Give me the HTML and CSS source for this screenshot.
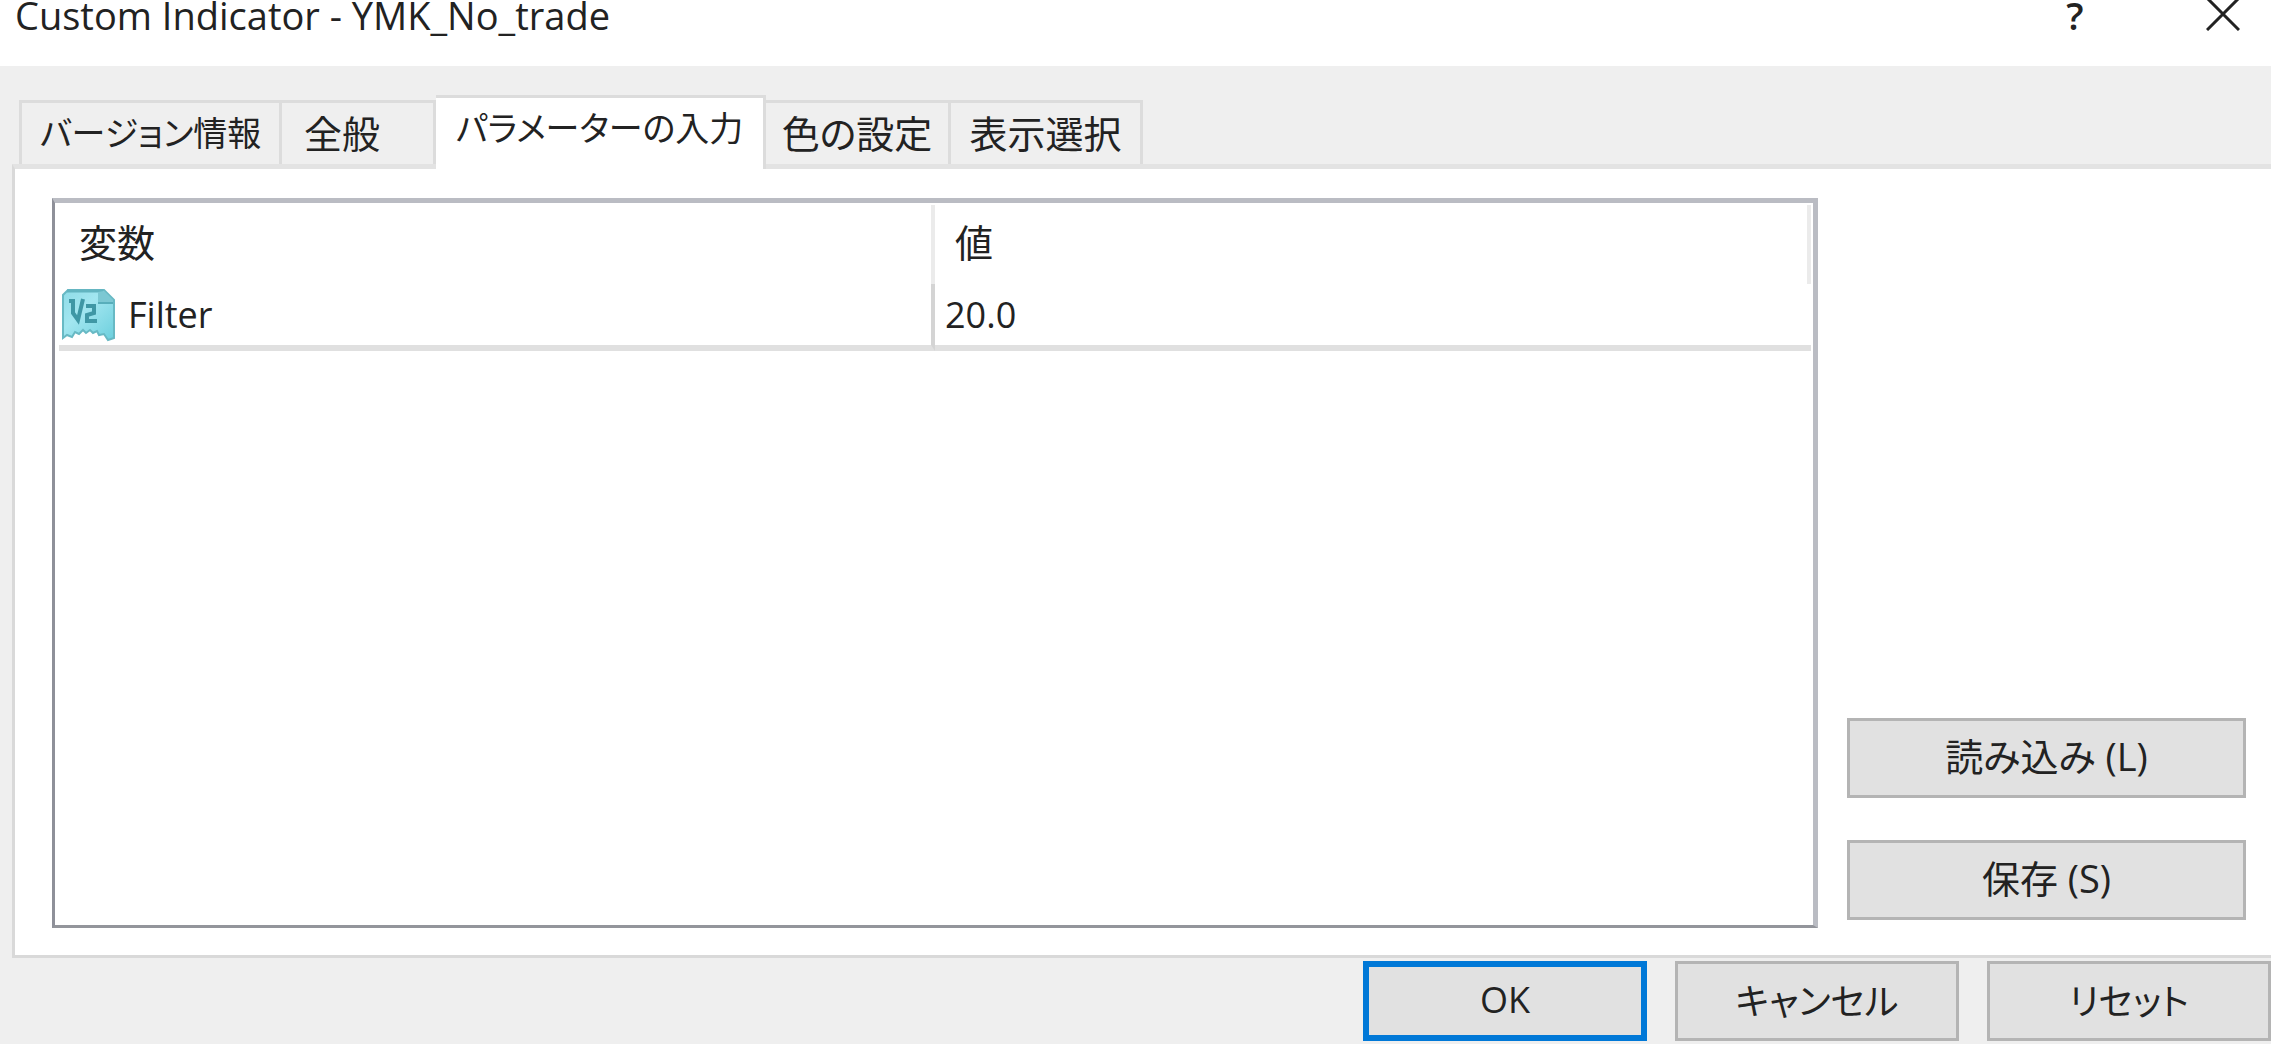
FILE: index.html
```
<!DOCTYPE html>
<html lang="ja">
  <head>
    <meta charset="UTF-8" />
    <meta name="viewport" content="width=device-width, initial-scale=1.0" />
    <title>Custom Indicator - YMK_No_trade</title>
    <link rel="stylesheet" href="styles.css">
  </head>
  <body>
    <header class="titlebar">
      <h1>Custom Indicator - YMK_No_trade</h1>
      <button class="title-btn help" type="button">?</button>
      <button class="title-btn" type="button" aria-label="閉じる">
        <svg class="close-icon" viewBox="0 0 34 34">
          <path d="M1 1L33 33M33 1L1 33" fill="none" stroke="#222" stroke-width="3" />
        </svg>
      </button>
    </header>
    <main class="dialog">
      <div class="tabs" role="tablist">
        <button class="tab tab-version" role="tab" type="button">バージョン情報</button>
        <button class="tab tab-general" role="tab" type="button">全般</button>
        <button class="tab tab-inputs active" role="tab" type="button" aria-selected="true">パラメーターの入力</button>
        <button class="tab tab-colors" role="tab" type="button">色の設定</button>
        <button class="tab tab-display" role="tab" type="button">表示選択</button>
      </div>
      <section class="panel" role="tabpanel">
        <div class="list">
          <table>
            <thead>
              <tr>
                <th>変数</th>
                <th>値</th>
              </tr>
            </thead>
            <tbody>
              <tr>
                <td>
                  <div class="name">
                    <svg class="type-icon" viewBox="0 0 54 54">
                      <defs>
                        <linearGradient id="paper" x1="0" y1="0" x2="1" y2="1">
                          <stop offset="0" stop-color="#8fdbe7" />
                          <stop offset="0.4" stop-color="#a2e6f0" />
                          <stop offset="1" stop-color="#6ccfdd" />
                        </linearGradient>
                      </defs>
                      <path d="M7 2H43L53 12V50L47 52L43 46L38 47L36 43L32 45L29 42L25 45L22 42L18 46L14 44L11 49L6 47L2 50V7Z" fill="url(#paper)" stroke="#68b9c4" stroke-width="2" />
                      <path d="M6 3H42" stroke="#62b4c0" stroke-width="3" />
                      <path d="M37 4V15H52V12L43 3Z" fill="#7cc8d3" />
                      <path d="M37 15H52" stroke="#58aebb" stroke-width="2" />
                      <path d="M8 13H12V25L17 32L22 11M25 18H33V25L26 27V33H36" fill="none" stroke="#3f97a5" stroke-width="4" />
                    </svg>
                    <span>Filter</span>
                  </div>
                </td>
                <td>20.0</td>
              </tr>
            </tbody>
          </table>
        </div>
        <div class="side">
          <button class="btn" type="button">読み込み (L)</button>
          <button class="btn" type="button">保存 (S)</button>
        </div>
      </section>
      <footer class="actions">
        <button class="btn primary" type="button">OK</button>
        <button class="btn" type="button">キャンセル</button>
        <button class="btn" type="button">リセット</button>
      </footer>
    </main>
  </body>
</html>
```

FILE: styles.css
```
* {
  box-sizing: border-box;
}
body {
  margin: 0;
  min-height: 100vh;
  display: flex;
  flex-direction: column;
  background-color: #efefef;
  color: #222;
  font-family: "Open Sans", "Noto Sans CJK JP", sans-serif;
  font-size: 36px;
  font-feature-settings: "palt";
}
button {
  font: inherit;
  font-feature-settings: inherit;
  color: inherit;
  padding: 0;
}
.titlebar {
  display: flex;
  align-items: flex-start;
  height: 66px;
  padding-left: 15px;
  background-color: #fff;
}
.titlebar h1 {
  flex: 1;
  margin: 0;
  font-size: 38px;
  font-weight: 400;
  line-height: 30px;
}
.title-btn {
  display: flex;
  justify-content: center;
  width: 96px;
  border: 0;
  background: none;
  line-height: 30px;
}
.title-btn.help {
  width: 200px;
  font-size: 38px;
  font-weight: 600;
}
.close-icon {
  width: 34px;
  height: 34px;
  margin-top: -3px;
}
.dialog {
  flex: 1;
  display: flex;
  flex-direction: column;
  padding: 29px 0 3px 12px;
}

/* tabs */
.tabs {
  display: flex;
  align-items: flex-end;
  padding-left: 7px;
  margin-bottom: -5px;
}
.tab {
  height: 69px;
  padding-bottom: 2px;
  border: 3px solid #dcdcdc;
  border-left: 0;
  border-bottom: 5px solid #e3e3e3;
  background-color: #efefef;
  font-size: 38px;
  line-height: 58px;
  white-space: nowrap;
}
.tab-version {
  width: 263px;
  border-left: 3px solid #dcdcdc;
  font-size: 34px;
}
.tab-general {
  width: 154px;
  padding-left: 22px;
  text-align: left;
}
.tab-inputs {
  width: 330px;
  font-size: 34px;
}
.tab-colors {
  width: 185px;
}
.tab-display {
  width: 192px;
}
.tab.active {
  position: relative;
  height: 74px;
  border-bottom: 0;
  background-color: #fff;
  padding-bottom: 12px;
}

/* panel */
.panel {
  flex: 1;
  display: flex;
  gap: 29px;
  padding: 29px 25px 27px 37px;
  background-color: #fff;
  border: 3px solid #d9d9d9;
  border-top: 5px solid #e3e3e3;
  border-right: 0;
}
.list {
  flex: 1;
  padding: 2px 2px 0 4px;
  border: 5px solid #babcc3;
  border-left: 3px solid #8e9099;
  border-bottom: 3px solid #93959b;
}
table {
  width: 100%;
  table-layout: fixed;
  border-collapse: separate;
  border-spacing: 0;
}
th {
  height: 79px;
  padding: 0 20px 8px;
  border-right: 4px solid #ebebeb;
  font-size: 38px;
  font-weight: 400;
  text-align: left;
}
td {
  height: 67px;
  padding: 0 10px;
  border-bottom: 6px solid #e0e0e0;
}
td:first-child {
  padding: 0 2px;
  border-right: 4px solid #d4d4d4;
}
.name {
  display: flex;
  align-items: center;
  gap: 13px;
}
.type-icon {
  width: 54px;
  height: 54px;
}

/* buttons */
.side {
  width: 399px;
  display: flex;
  flex-direction: column;
  justify-content: flex-end;
  gap: 42px;
  padding-bottom: 8px;
}
.btn {
  height: 80px;
  padding-bottom: 4px;
  border: 3px solid #b4b4b4;
  background-color: #e1e1e1;
}
.side .btn {
  padding-bottom: 8px;
  font-size: 38px;
}
.btn.primary {
  border: 6px solid #0078d7;
}
.actions {
  display: flex;
  justify-content: flex-end;
  gap: 28px;
  padding-top: 3px;
}
.actions .btn {
  width: 284px;
}
```
